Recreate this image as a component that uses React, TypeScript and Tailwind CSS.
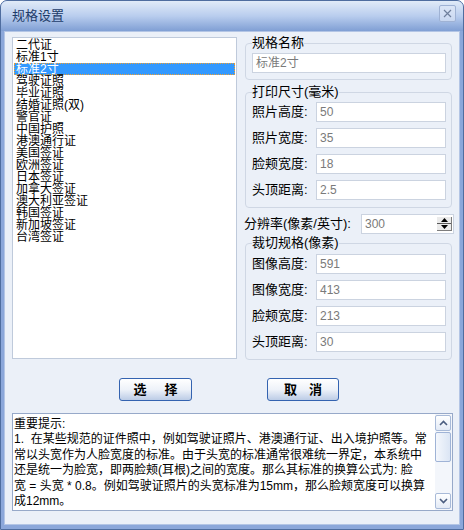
import React from "react";

const specs = [
  "二代证",
  "标准1寸",
  "标准2寸",
  "驾驶证照",
  "毕业证照",
  "结婚证照(双)",
  "警官证",
  "中国护照",
  "港澳通行证",
  "美国签证",
  "欧洲签证",
  "日本签证",
  "加拿大签证",
  "澳大利亚签证",
  "韩国签证",
  "新加坡签证",
  "台湾签证",
];

const tips = [
  "重要提示:",
  "1.  在某些规范的证件照中，例如驾驶证照片、港澳通行证、出入境护照等。常",
  "常以头宽作为人脸宽度的标准。由于头宽的标准通常很难统一界定，本系统中",
  "还是统一为脸宽，即两脸颊(耳根)之间的宽度。那么其标准的换算公式为: 脸",
  "宽 = 头宽 * 0.8。例如驾驶证照片的头宽标准为15mm，那么脸颊宽度可以换算",
  "成12mm。",
];

function Field({ label, value }: { label: string; value: string }) {
  return (
    <div className="flex h-[20px] items-center">
      <span className="w-[64px] whitespace-nowrap text-[13px] leading-[20px]">{label}</span>
      <div className="h-[20px] w-[130px] border border-[#cbd3e0] bg-white pl-[3px] text-[12px] leading-[18px] text-[#7a7a7a]">
        {value}
      </div>
    </div>
  );
}

function Chevron({ up }: { up?: boolean }) {
  return (
    <svg width="9" height="6" viewBox="0 0 9 6">
      <polyline
        points={up ? "1,5 4.5,1.5 8,5" : "1,1 4.5,4.5 8,1"}
        fill="none"
        stroke="#4a5d80"
        strokeWidth="1.6"
      />
    </svg>
  );
}

export default function App() {
  return (
    <div className="flex h-[530px] w-[464px] flex-col overflow-hidden rounded-t-[7px] border border-[#4f6d9f] bg-[#8ba7da] font-['Liberation_Sans','Noto_Sans_CJK_SC',sans-serif] text-black">
      {/* 标题栏 */}
      <div className="flex h-[30px] shrink-0 items-start justify-between bg-linear-to-b from-[#e1ebf8] via-[#b9cdee] to-[#809fd4] pl-[11px] pr-[7px]">
        <span className="mt-[7px] text-[13px] leading-[16px] text-[#1d3b69]">规格设置</span>
        <div className="mt-[4px] flex h-[17px] w-[17px] items-center justify-center rounded-[2px] border border-[#9fb2d4] bg-[#dfe8f6]/60">
          <svg width="9" height="9" viewBox="0 0 9 9">
            <path d="M1 1L8 8M8 1L1 8" stroke="#6f7f9c" strokeWidth="1.2" />
          </svg>
        </div>
      </div>

      <div className="mx-[3px] mb-[4px] flex flex-1 flex-col border border-[#b3c5e5] bg-[#ebf0f8] pl-[7px] pt-[4px]">
        <div className="flex items-start">
          {/* 规格列表 */}
          <div className="mt-[1px] h-[322px] w-[225px] border border-[#bfcadb] bg-white pt-[1px]">
            {specs.map((s, i) =>
              i === 2 ? (
                <div
                  key={s}
                  className="mx-[1px] h-[12px] whitespace-nowrap border border-dotted border-[#f0a030] bg-[#3399ff] pl-[1px] text-[12px] leading-[10px] text-white"
                >
                  {s}
                </div>
              ) : (
                <div
                  key={s}
                  className="mx-[1px] h-[12px] whitespace-nowrap border border-transparent pl-[1px] text-[12px] leading-[10px]"
                >
                  {s}
                </div>
              )
            )}
          </div>

          {/* 右侧参数 */}
          <div className="ml-[7px] flex w-[210px] flex-col">
            <fieldset className="ml-[1px] w-[207px] rounded-[4px] border border-[#cfd7e4] pb-[6px] pl-[6px] pr-[5px]">
              <legend className="text-[13px] leading-[14px]">规格名称</legend>
              <div className="mt-[3px] h-[20px] w-[194px] border border-[#cbd3e0] bg-white pl-[3px] text-[12px] leading-[18px] text-[#7a7a7a]">
                标准2寸
              </div>
            </fieldset>

            <fieldset className="ml-[1px] mt-[5px] w-[207px] rounded-[4px] border border-[#cfd7e4] pb-[7px] pl-[6px] pr-[5px]">
              <legend className="text-[13px] leading-[14px]">打印尺寸(毫米)</legend>
              <div className="mt-[3px] flex flex-col gap-[6px]">
                <Field label="照片高度:" value="50" />
                <Field label="照片宽度:" value="35" />
                <Field label="脸颊宽度:" value="18" />
                <Field label="头顶距离:" value="2.5" />
              </div>
            </fieldset>

            <div className="mt-[6px] flex h-[20px] items-center">
              <span className="w-[117px] whitespace-nowrap text-[13px] leading-[20px]">分辨率(像素/英寸):</span>
              <div className="flex h-[20px] w-[93px] items-center border border-[#cbd3e0] bg-white pl-[3px] pr-[1px]">
                <span className="text-[12px] leading-[18px] text-[#7a7a7a]">300</span>
                <div className="ml-auto flex h-[14px] w-[15px] flex-col border-b border-r border-[#7d7d7d] bg-[#ebebeb]">
                  <div className="flex h-[7px] items-center justify-center border-b border-[#5a5a5a]">
                    <svg width="7" height="4" viewBox="0 0 7 4">
                      <polygon points="3.5,0 7,4 0,4" fill="#000" />
                    </svg>
                  </div>
                  <div className="flex flex-1 items-center justify-center">
                    <svg width="7" height="4" viewBox="0 0 7 4">
                      <polygon points="0,0 7,0 3.5,4" fill="#000" />
                    </svg>
                  </div>
                </div>
              </div>
            </div>

            <fieldset className="ml-[1px] mt-[2px] w-[207px] rounded-[4px] border border-[#cfd7e4] pb-[7px] pl-[6px] pr-[5px]">
              <legend className="text-[13px] leading-[14px]">裁切规格(像素)</legend>
              <div className="mt-[4px] flex flex-col gap-[6px]">
                <Field label="图像高度:" value="591" />
                <Field label="图像宽度:" value="413" />
                <Field label="脸颊宽度:" value="213" />
                <Field label="头顶距离:" value="30" />
              </div>
            </fieldset>
          </div>
        </div>

        {/* 按钮 */}
        <div className="mt-[18px] flex">
          <button className="ml-[107px] flex h-[23px] w-[73px] items-center justify-center gap-[18px] rounded-[3px] border border-[#3463b0] bg-linear-to-b from-[#ffffff] via-[#eef2f9] to-[#bccce6] text-[13px] font-bold leading-none">
            <span>选</span>
            <span>择</span>
          </button>
          <button className="ml-[75px] flex h-[23px] w-[72px] items-center justify-center gap-[12px] rounded-[3px] border border-[#3463b0] bg-linear-to-b from-[#ffffff] via-[#eef2f9] to-[#bccce6] text-[13px] font-bold leading-none">
            <span>取</span>
            <span>消</span>
          </button>
        </div>

        {/* 提示 */}
        <div className="mt-[12px] flex h-[98px] w-[441px] border border-[#97a9c9] bg-white">
          <div className="flex-1 overflow-hidden pl-[1px] pt-[3px]">
            {tips.map((t) => (
              <div key={t} className="whitespace-pre text-[12px] leading-[15.4px]">
                {t}
              </div>
            ))}
          </div>
          <div className="flex w-[17px] flex-col bg-[#f3f6fb] py-[1px] pr-[1px]">
            <div className="flex h-[16px] items-center justify-center rounded-[2px] border border-[#a8bad8] bg-linear-to-b from-white to-[#e3eaf6]">
              <Chevron up />
            </div>
            <div className="mt-[1px] h-[30px] rounded-[2px] border border-[#9fb3d6] bg-linear-to-r from-[#f4f7fc] to-[#dbe5f4]" />
            <div className="flex-1" />
            <div className="flex h-[16px] items-center justify-center rounded-[2px] border border-[#a8bad8] bg-linear-to-b from-white to-[#e3eaf6]">
              <Chevron />
            </div>
          </div>
        </div>
      </div>
    </div>
  );
}
